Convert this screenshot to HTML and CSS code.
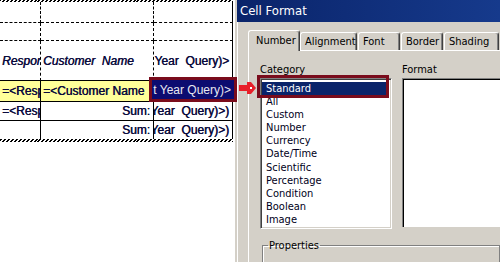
FILE: index.html
```html
<!DOCTYPE html>
<html lang="en">
  <head>
    <meta charset="UTF-8" />
    <title>Cell Format</title>
    <link rel="stylesheet" href="styles.css">
  </head>

  <body>
    <div class="screen">
      <section class="sheet">
        <div class="hatch"></div>
        <div class="grid">
          <div class="cell dash-r dash-b"></div>
          <div class="cell dash-r dash-b"></div>
          <div class="cell line-r dash-b"></div>

          <div class="cell dash-r dash-b"></div>
          <div class="cell dash-r dash-b"></div>
          <div class="cell line-r dash-b"></div>

          <div class="cell dash-r line-b head"><span>Respon</span></div>
          <div class="cell dash-r line-b head"><span>Customer&nbsp;&nbsp;Name</span></div>
          <div class="cell line-r line-b head end"><span>Year&nbsp;&nbsp;Query)&gt;</span></div>

          <div class="cell line-r line-b yellow"><span>=&lt;Resp</span></div>
          <div class="cell line-r line-b yellow"><span>=&lt;Customer Name</span></div>
          <div class="cell line-r line-b"></div>

          <div class="cell line-r line-b"><span>=&lt;Resp</span></div>
          <div class="cell line-r line-b end"><span>Sum:</span></div>
          <div class="cell line-r line-b end"><span>Year&nbsp;&nbsp;Query)&gt;)</span></div>

          <div class="cell line-r"></div>
          <div class="cell line-r end"><span>Sum:</span></div>
          <div class="cell line-r end"><span>Year&nbsp;&nbsp;Query)&gt;)</span></div>
        </div>
        <div class="hatch bottom"></div>
      </section>

      <div class="split"></div>

      <section class="dialog">
        <div class="titlebar">Cell Format</div>
        <div class="dialog-body">
          <div class="tabs">
            <div class="tab on" style="width: 52px">Number</div>
            <div class="tab" style="width: 57px">Alignment</div>
            <div class="tab" style="width: 42px">Font</div>
            <div class="tab" style="width: 42px">Border</div>
            <div class="tab" style="width: 55px">Shading</div>
          </div>
          <div class="panel">
            <div class="cols">
              <div class="col-category">
                <div class="label">Category</div>
                <ul class="listbox">
                  <li class="selected">Standard</li>
                  <li>All</li>
                  <li>Custom</li>
                  <li>Number</li>
                  <li>Currency</li>
                  <li>Date/Time</li>
                  <li>Scientific</li>
                  <li>Percentage</li>
                  <li>Condition</li>
                  <li>Boolean</li>
                  <li>Image</li>
                </ul>
              </div>
              <div class="col-format">
                <div class="label">Format</div>
                <div class="format-box"></div>
              </div>
            </div>
            <fieldset class="props">
              <legend>Properties</legend>
            </fieldset>
          </div>
        </div>
      </section>

      <!-- annotation overlays -->
      <div class="mark mark-cell">
        <div class="mark-fill"><span>t Year Query)&gt;</span></div>
      </div>
      <div class="mark mark-item"></div>
      <svg class="arrow" width="17" height="12" viewBox="0 0 17 12">
        <rect x="0" y="3" width="9" height="6" fill="#e8202a" />
        <polygon points="8,0 12,0 17,6 12,12 8,12" fill="#e8202a" />
        <rect x="11" y="5" width="2" height="2" fill="#fff" />
      </svg>
    </div>
  </body>
</html>
```

FILE: styles.css
```css
body {
  margin: 0;
  padding: 0;
  background-color: #ffffff;
  overflow: hidden;
}

.screen {
  position: relative;
  display: flex;
  width: 500px;
  height: 262px;
  overflow: hidden;
}

/* report sheet on the left */
.sheet {
  width: 235px;
  flex-shrink: 0;
  background-color: #ffffff;
  font-family: "Liberation Sans", Arial, sans-serif;
  font-size: 12px;
  color: #0a0a3c;
  text-shadow: 0.4px 0 0 #0a0a3c;
}

.hatch {
  width: 233px;
  height: 2px;
  background: repeating-linear-gradient(-45deg, #000 0, #000 1.4px, #fff 1.4px, #fff 2.8px);
}

.hatch.bottom {
  height: 3px;
}

.grid {
  display: grid;
  width: 233px;
  grid-template-columns: 41px 113px 79px;
  grid-template-rows: 21px 18px 40px 21px 19px 18px;
}

.cell {
  box-sizing: border-box;
  display: flex;
  align-items: center;
  overflow: hidden;
  white-space: nowrap;
  padding: 0 2px;
}

.cell span {
  flex-shrink: 0;
}

.cell.end {
  justify-content: flex-end;
  padding-right: 3px;
}

.cell.head span {
  font-style: italic;
}

.cell.head.end span {
  font-style: normal;
}

.dash-r {
  border-right: 1px dashed #000;
}

.dash-b {
  border-bottom: 1px dashed #000;
}

.line-r {
  border-right: 1px solid #000;
}

.line-b {
  border-bottom: 1px solid #000;
}

.yellow {
  background-color: #ffff99;
}

.split {
  width: 2px;
  flex-shrink: 0;
  background-color: #d4d0c8;
}

/* dialog */
.dialog {
  flex: 1;
  background-color: #d4d0c8;
  font-family: "DejaVu Sans Condensed", "DejaVu Sans", sans-serif;
  font-stretch: condensed;
  font-size: 11px;
  color: #000;
  box-shadow: inset 1px 0 #ffffff;
}

.titlebar {
  height: 22px;
  line-height: 22px;
  padding-left: 3px;
  font-size: 13px;
  color: #ffffff;
  background: linear-gradient(to right, #0a246a, #163a8c);
}

.dialog-body {
  padding: 8px 0 0 11px;
}

.tabs {
  display: flex;
  align-items: flex-end;
  height: 20px;
}

.tab {
  box-sizing: border-box;
  height: 18px;
  padding: 2px 0 0 4px;
  margin-right: 1px;
  border-top: 1px solid #ffffff;
  border-left: 1px solid #ffffff;
  border-right: 1px solid #404040;
  border-radius: 3px 3px 0 0;
  box-shadow: inset -1px 0 #808080;
  white-space: nowrap;
  overflow: hidden;
}

.tab.on {
  position: relative;
  z-index: 1;
  height: 21px;
  margin-bottom: -1px;
  margin-right: 0;
  padding-top: 3px;
  padding-left: 7px;
  background-color: #d4d0c8;
}

.panel {
  border-top: 1px solid #ffffff;
  border-left: 1px solid #ffffff;
  padding: 12px 0 0 11px;
  height: 220px;
}

.cols {
  display: flex;
  gap: 10px;
}

.col-category {
  width: 132px;
  flex-shrink: 0;
}

.col-format {
  flex: 1;
}

.label {
  line-height: 13px;
  margin-bottom: 2px;
}

.listbox {
  box-sizing: border-box;
  list-style: none;
  margin: 0;
  padding: 3px 0 0 0;
  height: 151px;
  background-color: #ffffff;
  border-top: 1px solid #808080;
  border-left: 1px solid #808080;
  border-right: 1px solid #ffffff;
  border-bottom: 1px solid #ffffff;
  box-shadow: inset 1px 1px #404040, inset -1px -1px #d4d0c8;
}

.listbox li {
  line-height: 13.1px;
  padding-left: 4px;
  margin: 0 2px 0 1px;
  color: #000020;
}

.listbox li.selected {
  background-color: #0a246a;
  color: #ffffff;
}

.format-box {
  box-sizing: border-box;
  height: 149px;
  margin-top: 2px;
  background-color: #ffffff;
  border-top: 1px solid #808080;
  border-left: 1px solid #808080;
  box-shadow: inset 1px 1px #000000;
}

.props {
  margin: 10px 0 0 2px;
  padding: 0;
  height: 40px;
  border: 1px solid #808080;
  box-shadow: inset 1px 1px #ffffff;
}

.props legend {
  padding: 0 1px;
  margin-left: 5px;
  line-height: 13px;
}

/* annotation overlays */
.mark {
  position: absolute;
  box-sizing: border-box;
  border: 3px solid #7a0c1c;
}

.mark-cell {
  left: 149px;
  top: 77px;
  width: 88px;
  height: 25px;
}

.mark-fill {
  display: flex;
  justify-content: flex-end;
  align-items: center;
  height: 100%;
  padding-right: 3px;
  overflow: hidden;
  white-space: nowrap;
  background-color: #0c0c70;
  background-image: radial-gradient(#3a3aa0 0.6px, transparent 0.7px);
  background-size: 2px 2px;
  font-family: "Liberation Sans", Arial, sans-serif;
  font-size: 12px;
  color: #e8e8f0;
}

.mark-fill span {
  flex-shrink: 0;
}

.mark-item {
  left: 257px;
  top: 75px;
  width: 132px;
  height: 23px;
}

.arrow {
  position: absolute;
  left: 239px;
  top: 82px;
}
```
